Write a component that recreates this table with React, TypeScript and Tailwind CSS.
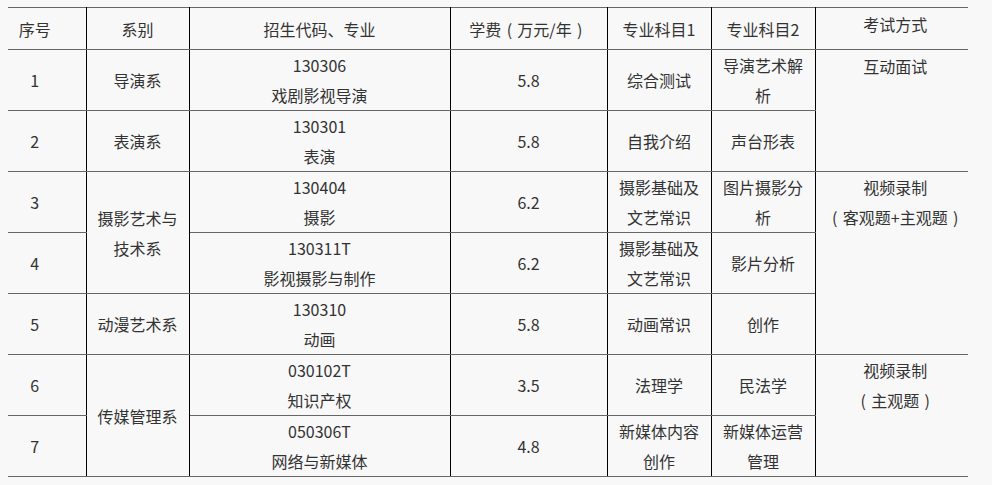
import { FC, ReactNode } from "react";

type Cell = {
  content: ReactNode;
  rowSpan?: number;
  top?: boolean;
  className?: string;
};

const baseCell =
  "border-y border-y-[#666666] border-x border-x-black p-0 text-center leading-[30px] font-normal";

// full-width bracket drawn centred in a full em, as the original font does
const P: FC<{ c: string }> = ({ c }) => (
  <span className="inline-block w-[16px] text-center">{c}</span>
);

const rows: Cell[][] = [
  [
    { content: "1", className: "pr-[24px]" },
    { content: "导演系" },
    { content: <>130306<br />戏剧影视导演</> },
    { content: "5.8" },
    { content: "综合测试" },
    { content: <>导演艺术解<br />析</> },
    { content: "互动面试", rowSpan: 2, top: true, className: "pl-[7px] pt-[1px]" },
  ],
  [
    { content: "2", className: "pr-[24px]" },
    { content: "表演系" },
    { content: <>130301<br />表演</> },
    { content: "5.8" },
    { content: "自我介绍" },
    { content: "声台形表" },
  ],
  [
    { content: "3", className: "pr-[24px]" },
    { content: <>摄影艺术与<br />技术系</>, rowSpan: 2 },
    { content: <>130404<br />摄影</> },
    { content: "6.2" },
    { content: <>摄影基础及<br />文艺常识</> },
    { content: <>图片摄影分<br />析</> },
    {
      content: (
        <>
          视频录制
          <br />
          <P c="(" />客观题+主观题<P c=")" />
        </>
      ),
      rowSpan: 3,
      top: true,
      className: "pl-[7px]",
    },
  ],
  [
    { content: "4", className: "pr-[24px]" },
    { content: <>130311T<br />影视摄影与制作</> },
    { content: "6.2" },
    { content: <>摄影基础及<br />文艺常识</> },
    { content: "影片分析" },
  ],
  [
    { content: "5", className: "pr-[24px]" },
    { content: "动漫艺术系" },
    { content: <>130310<br />动画</> },
    { content: "5.8" },
    { content: "动画常识" },
    { content: "创作" },
  ],
  [
    { content: "6", className: "pr-[24px]" },
    { content: "传媒管理系", rowSpan: 2 },
    { content: <>030102T<br />知识产权</> },
    { content: "3.5" },
    { content: "法理学" },
    { content: "民法学" },
    {
      content: (
        <>
          视频录制
          <br />
          <P c="(" />主观题<P c=")" />
        </>
      ),
      rowSpan: 2,
      top: true,
      className: "pl-[7px]",
    },
  ],
  [
    { content: "7", className: "pr-[24px]" },
    { content: <>050306T<br />网络与新媒体</> },
    { content: "4.8" },
    { content: <>新媒体内容<br />创作</> },
    { content: <>新媒体运营<br />管理</> },
  ],
];

const headers: { key: string; label: ReactNode; className?: string }[] = [
  { key: "no", label: "序号", className: "pr-[24px] border-l-0" },
  { key: "dept", label: "系别" },
  { key: "code", label: "招生代码、专业" },
  {
    key: "fee",
    label: (
      <>
        学费<P c="(" />万元/年<P c=")" />
      </>
    ),
  },
  { key: "s1", label: "专业科目1" },
  { key: "s2", label: "专业科目2" },
  { key: "exam", label: "考试方式", className: "align-top pl-[7px] pt-[1px] border-r-0" },
];

const App: FC = () => {
  return (
    <main
      className="min-h-[485px] w-[992px] bg-[#f8f8f8] pt-[7px] pl-[8px] text-[16px] text-[#333333]"
      style={{ fontFamily: '"Noto Sans CJK SC", "Noto Sans", sans-serif' }}
    >
      <table className="w-[960px] table-fixed border-collapse">
        <colgroup>
          <col className="w-[78px]" />
          <col className="w-[103px]" />
          <col className="w-[261px]" />
          <col className="w-[157px]" />
          <col className="w-[104px]" />
          <col className="w-[104px]" />
          <col className="w-[153px]" />
        </colgroup>
        <thead>
          <tr>
            {headers.map((h) => (
              <th
                key={h.key}
                className={`${baseCell} h-[42px] align-middle ${h.className ?? ""}`}
              >
                {h.label}
              </th>
            ))}
          </tr>
        </thead>
        <tbody>
          {rows.map((row, i) => (
            <tr key={i}>
              {row.map((cell, j) => {
                const first = j === 0;
                const last = cell.top;
                return (
                  <td
                    key={j}
                    rowSpan={cell.rowSpan}
                    className={`${baseCell} ${
                      cell.top ? "align-top" : "align-middle"
                    } ${first ? "border-l-0" : ""} ${
                      last ? "border-r-0" : ""
                    } ${cell.className ?? ""}`}
                  >
                    {cell.content}
                  </td>
                );
              })}
            </tr>
          ))}
        </tbody>
      </table>
    </main>
  );
};

export default App;
